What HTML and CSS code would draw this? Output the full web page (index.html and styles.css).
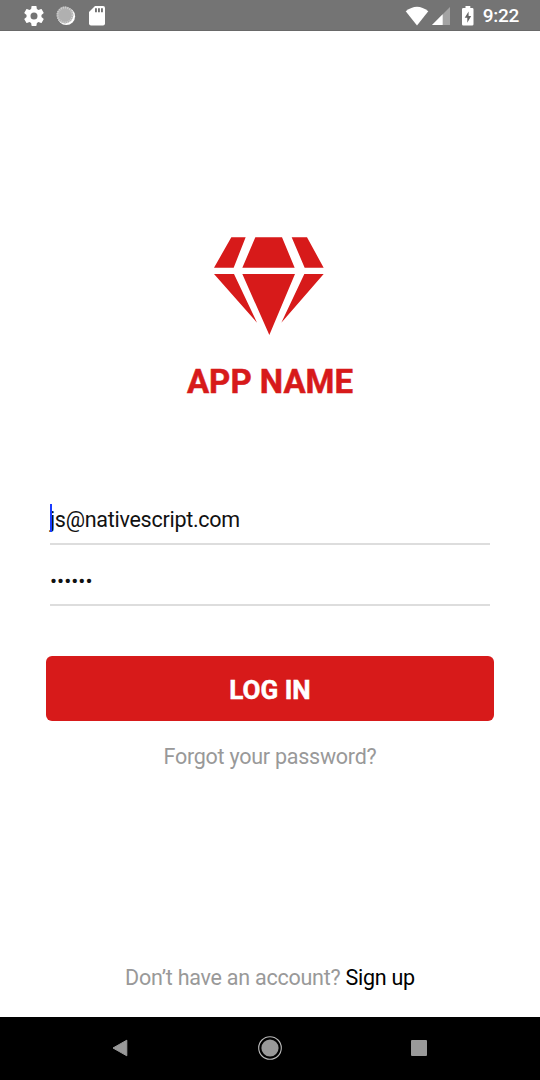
FILE: index.html
```html
<!DOCTYPE html>
<html lang="en">
<head>
<meta charset="utf-8">
<title>Log in</title>
<link rel="stylesheet" href="styles.css">
</head>
<body>
<div class="screen">
  <header class="status">
    <svg class="gear" width="24" height="24" viewBox="0 0 24 24"><path fill="#fff" d="M19.430 12.980c.04-.32.07-.64.07-.98s-.03-.66-.07-.98l2.110-1.650c.19-.15.24-.42.12-.64l-2-3.460c-.12-.22-.39-.3-.61-.22l-2.490 1c-.52-.4-1.080-.73-1.690-.98l-.38-2.650C14.460 2.180 14.250 2 14 2h-4c-.25 0-.46.18-.49.42l-.38 2.650c-.61.25-1.170.59-1.690.98l-2.490-1c-.23-.09-.49 0-.61.22l-2 3.460c-.13.22-.07.49.12.64l2.110 1.650c-.04.32-.07.65-.07.98s.03.66.07.98l-2.110 1.650c-.19.15-.24.42-.12.64l2 3.460c.12.22.39.3.61.22l2.490-1c.52.4 1.080.73 1.690.98l.38 2.650c.03.24.24.42.49.42h4c.25 0 .46-.18.49-.42l.38-2.650c.61-.25 1.170-.59 1.690-.98l2.490 1c.23.09.49 0 .61-.22l2-3.460c.12-.22.07-.49-.12-.64l-2.110-1.650zM12 15.500A3.500 3.500 0 1 1 12 8.500a3.500 3.500 0 0 1 0 7z"/></svg>
    <svg class="sync" width="20" height="20" viewBox="0 0 20 20"><circle cx="10.300" cy="10.300" r="8.800" fill="#fff"/><circle cx="9" cy="9" r="8.400" fill="#b0b0b0"/><circle cx="9" cy="9" r="7.500" fill="none" stroke="#cfcfcf" stroke-width="2" stroke-dasharray="1 1.200"/></svg>
    <svg class="card" width="16" height="20" viewBox="0 0 16 20"><path fill="#fff" d="M6 0h8a2 2 0 0 1 2 2v15.500a2 2 0 0 1-2 2H2a2 2 0 0 1-2-2V6z"/><path fill="#707070" d="M6 2.300h1.900v3.900H6zM9 2.300h1.900v3.900H9zM12 2.300h1.900v3.900H12z"/></svg>
    <span class="spacer"></span>
    <svg class="wifi" width="24" height="20" viewBox="0 0 24 20"><path fill="#fff" d="M12 19.500L.7 5.300Q12-3.700 23.300 5.300z"/></svg>
    <svg class="signal" width="18" height="18" viewBox="0 0 18 18"><path fill="#a3a3a3" d="M18 0v18H0z"/><path fill="#fff" d="M10.700 7.300V18H0z"/></svg>
    <svg class="battery" width="12" height="20" viewBox="0 0 12 20"><path fill="#fff" d="M3.500 0h4.800v2h1.900q1.300 0 1.300 1.300v14.900q0 1.300-1.300 1.300H1.300Q0 19.500 0 18.200V3.300Q0 2 1.300 2h2.200z"/><path fill="#656565" d="M6.600 5.500L2.700 11.700h2.600v5l3.900-6.700H6.600z"/></svg>
    <time class="clock">9:22</time>
  </header>
  <main class="login">
    <svg class="logo" width="110" height="98" viewBox="43 36 330 294" fill="#d71a1a"><path d="M95 37h43L102 128H43zM167 37h80L285 128H128zM276 37h46L372 128H315zM43 147h60L172 293zM128 147h158L209 330zM314 147h58L245 293z"/></svg>
    <h1 class="title">APP NAME</h1>
    <form class="form">
      <div class="field email"><i class="caret"></i>js@nativescript.com</div>
      <div class="field password">••••••</div>
      <button class="submit" type="button">LOG IN</button>
      <a class="forgot">Forgot your password?</a>
    </form>
    <p class="signup">Don’t have an account? <a class="signup-link">Sign up</a></p>
  </main>
  <nav class="navbar">
    <svg width="16" height="18" viewBox="0 0 16 18"><path fill="#999" stroke="#999" stroke-linejoin="round" d="M14.800 1.200v15.600L1 9z"/></svg>
    <svg width="24" height="24" viewBox="0 0 24 24"><circle cx="12" cy="12" r="8.600" fill="#999"/><circle cx="12" cy="12" r="11.300" fill="none" stroke="#bbb" stroke-width="1.100"/></svg>
    <svg width="16" height="16" viewBox="0 0 16 16"><rect width="16" height="16" rx="1" fill="#999"/></svg>
  </nav>
</div>
</body>
</html>
```
FILE: styles.css
```css
* { box-sizing: border-box; }
body { margin: 0; background: #fff; font-family: Roboto, sans-serif; }
.screen { width: 540px; height: 1080px; display: flex; flex-direction: column; overflow: hidden; }
.status { height: 31px; flex: none; display: flex; align-items: center; background: #747474; border-bottom: 1px solid #696969; padding: 1px 21px 0 22px; }
.sync { margin-left: 10px; }
.card { margin-left: 13px; }
.spacer { flex: 1; }
.signal { margin-left: 3px; }
.battery { margin-left: 12px; }
.clock { margin-left: 9px; color: #fff; font-size: 19px; font-weight: 500; line-height: 30px; letter-spacing: -0.3px; padding-top: 1px; }
.login { flex: 1; display: flex; flex-direction: column; align-items: center; padding-top: 206px; }
.logo { flex: none; margin-right: 2px; }
.title { margin: 27px 0 0; color: #d71a1a; font-size: 33px; font-weight: 700; line-height: 40px; white-space: nowrap; -webkit-text-stroke: 0.5px #d71a1a; }
.form { width: 448px; margin-top: 94px; display: flex; flex-direction: column; }
.field { position: relative; margin: 0 4px; color: #111; border-bottom: 2px solid #ddd; font-size: 21.5px; letter-spacing: -0.27px; white-space: nowrap; }
.email { height: 49px; line-height: 47px; }
.password { height: 61px; line-height: 72px; font-size: 21px; letter-spacing: 0; }
.caret { position: absolute; left: 0; top: 8px; width: 2px; height: 28px; background: #1a3cff; }
.submit { height: 65px; margin-top: 50px; border: 0; border-radius: 6px; background: #d71a1a; color: #fff; font: 700 26px/65px Roboto, sans-serif; padding: 2px 0 0; -webkit-text-stroke: 0.5px #fff; }
.forgot { margin-top: 21px; color: #999; font-size: 21.5px; letter-spacing: -0.25px; line-height: 30px; text-align: center; }
.signup { margin: auto 0 24px; color: #999; font-size: 21.5px; letter-spacing: -0.25px; line-height: 30px; white-space: nowrap; }
.signup-link { color: #000; }
.navbar { height: 63px; flex: none; display: flex; align-items: center; justify-content: space-between; background: #000; padding: 0 113px 1px 112px; }
```
